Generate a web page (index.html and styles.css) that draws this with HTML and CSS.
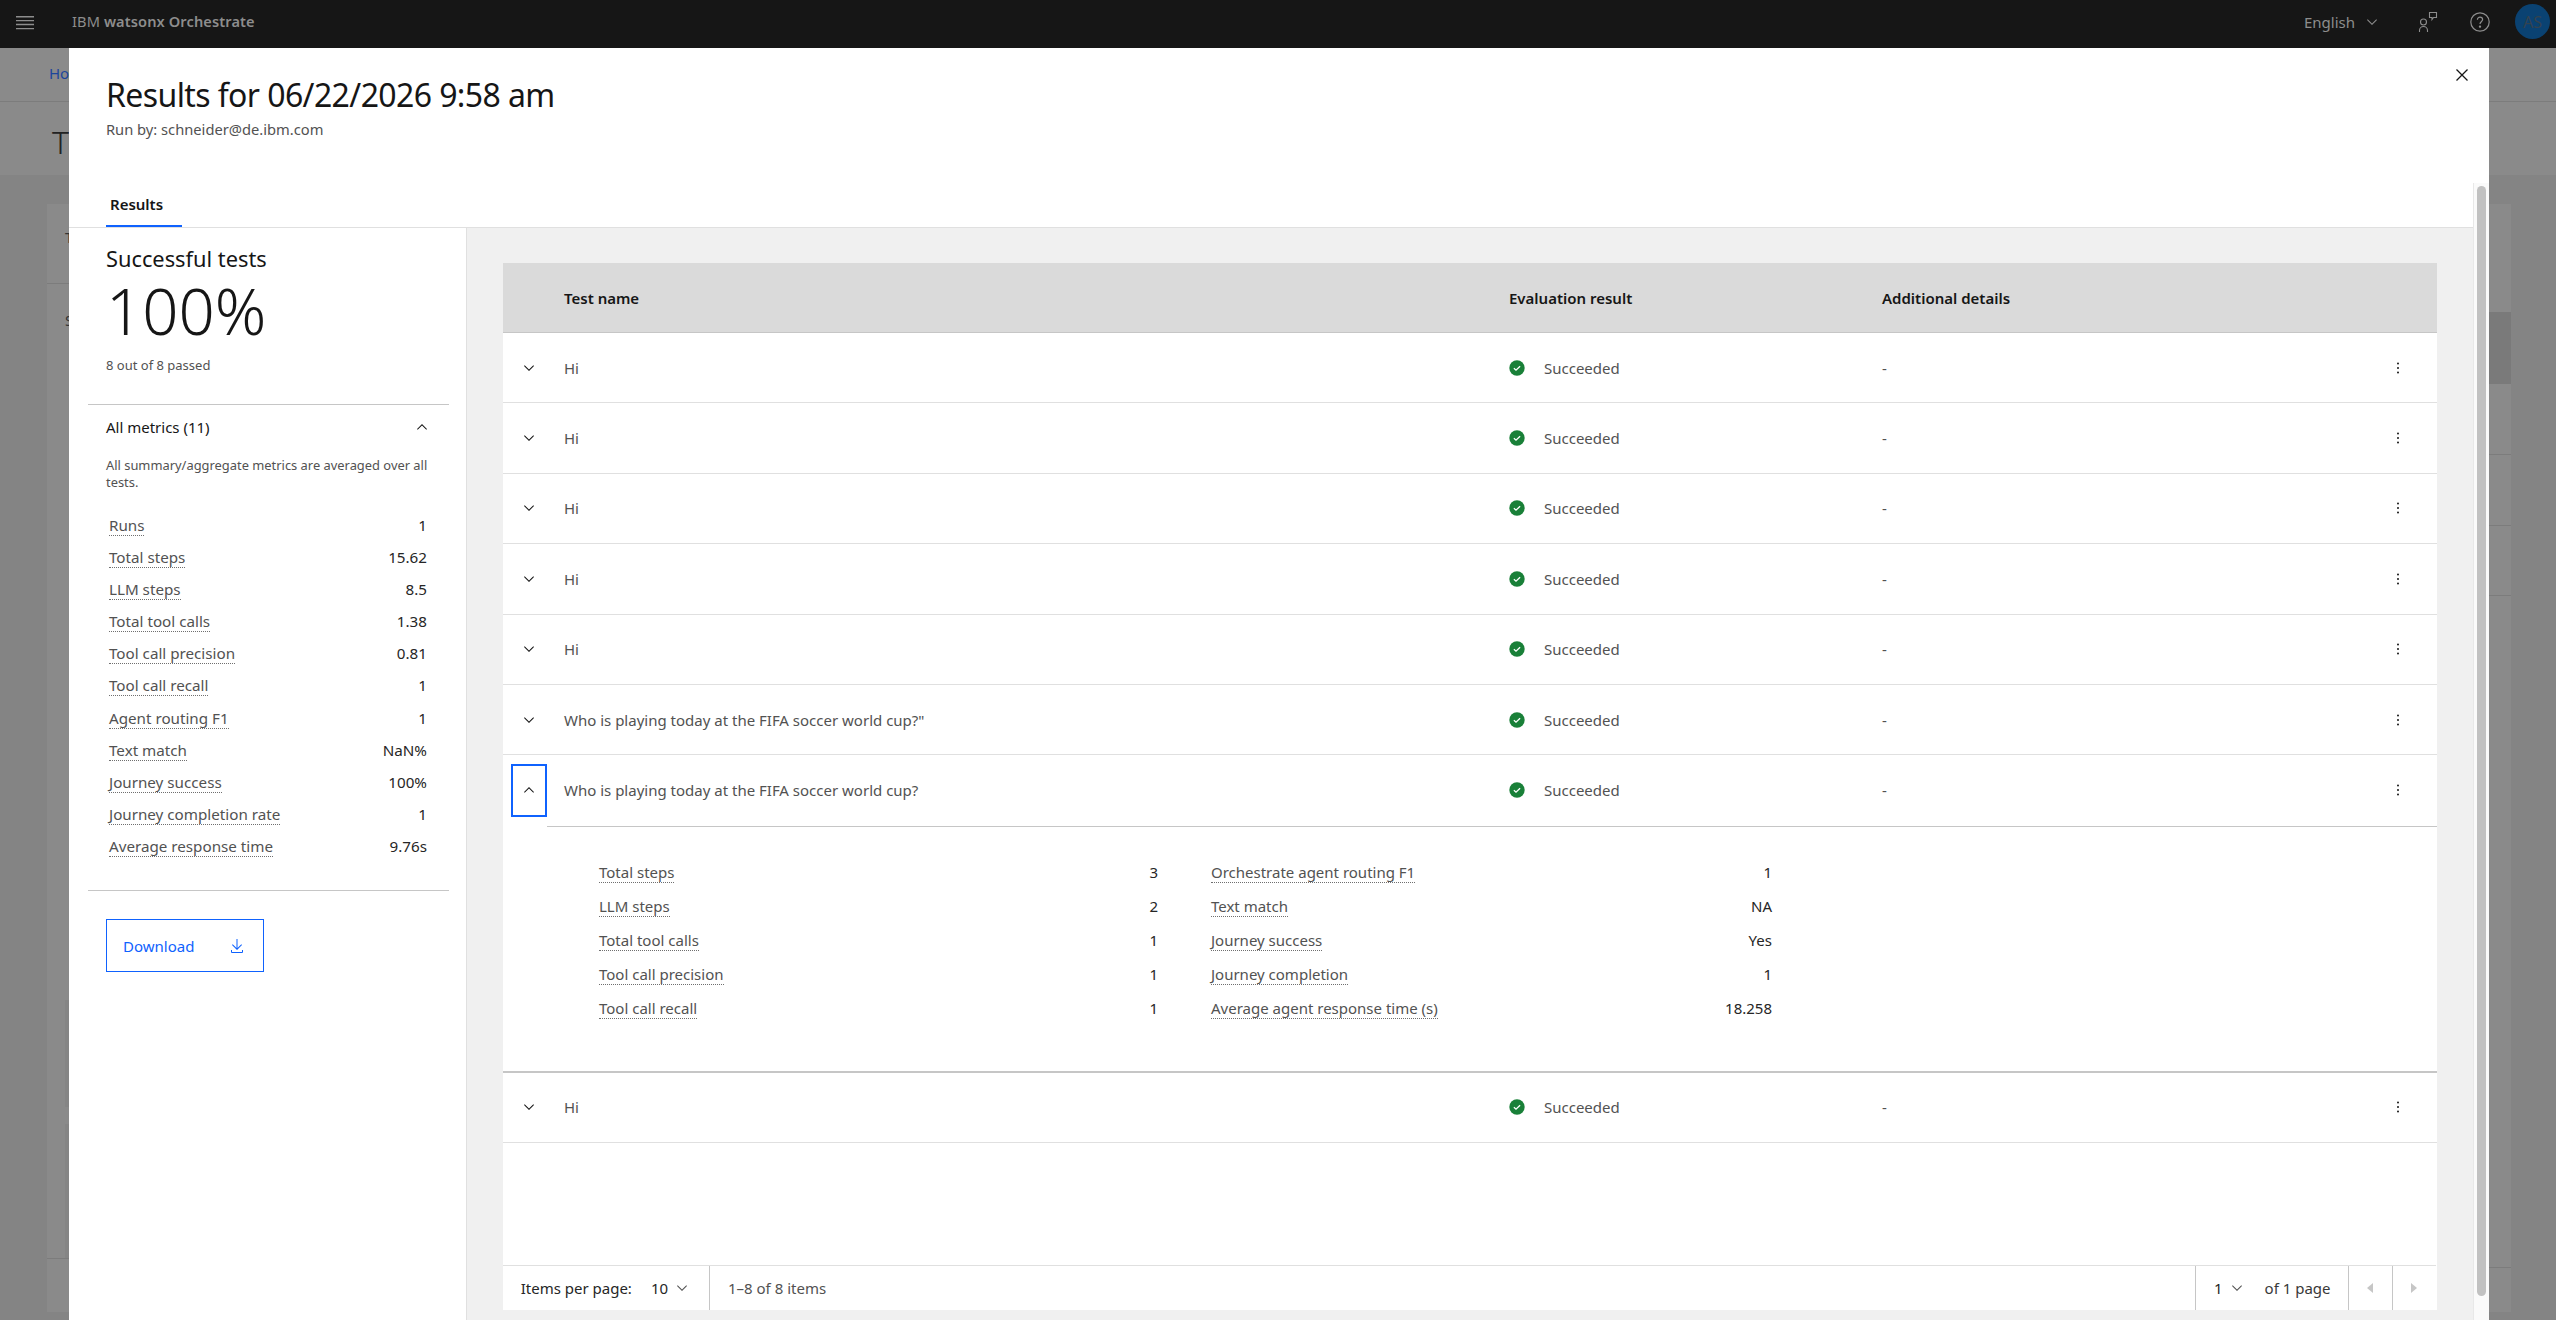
FILE: index.html
```html
<!DOCTYPE html>
<html lang="en">
<head>
<meta charset="utf-8">
<title>Results</title>
<link rel="stylesheet" href="styles.css">
</head>
<body>
<svg class="sprite" aria-hidden="true">
  <symbol id="down" viewBox="0 0 16 16"><path d="M8 11 3 6l.7-.7L8 9.6l4.3-4.3.7.7z"/></symbol>
  <symbol id="up" viewBox="0 0 16 16"><path d="m8 5 5 5-.7.7L8 6.4l-4.3 4.3L3 10z"/></symbol>
  <symbol id="more" viewBox="0 0 16 16"><circle cx="8" cy="3.5" r="1"/><circle cx="8" cy="8" r="1"/><circle cx="8" cy="12.5" r="1"/></symbol>
  <symbol id="ok" viewBox="0 0 16 16"><circle cx="8" cy="8" r="7.7" fill="#198038"/><path d="M4.9 8.2 7 10.2l4.1-4" fill="none" stroke="#fff" stroke-width="1.3"/></symbol>
</svg>

<header class="topbar">
  <svg class="burger" viewBox="0 0 18 14"><path d="M0 .7h18M0 4.6h18M0 8.5h18M0 12.6h18" stroke="#8d8d8d" stroke-width="1.4"/></svg>
  <div class="brand">IBM <b>watsonx Orchestrate</b></div>
  <div class="lang">English <svg class="ic16 dim"><use href="#down"/></svg></div>
  <svg class="chat" viewBox="0 0 24 24" fill="none" stroke="#8d8d8d" stroke-width="1.1">
    <circle cx="7.5" cy="13" r="3"/>
    <path d="M3.5 23v-1.500a4 4 0 0 1 8 0V23"/>
    <path d="M13.500 3.500h7v5h-3l-1.500 2v-2h-2.500z"/>
  </svg>
  <svg class="help" viewBox="0 0 20 20" fill="none" stroke="#8d8d8d" stroke-width="1.2">
    <circle cx="10" cy="10" r="9.2"/>
    <path d="M7.4 7.8c0-1.600 1.100-2.600 2.600-2.600s2.600 1 2.600 2.400c0 2.200-2.600 2.200-2.600 4.400"/>
    <circle cx="10" cy="14.600" r=".6" fill="#8d8d8d"/>
  </svg>
  <div class="avatar">AS</div>
</header>

<div class="page">
  <div class="page-head">
    <div class="crumbs"><a class="crumb">Home</a></div>
    <div class="page-title">T</div>
  </div>
  <div class="page-body">
    <div class="card">
      <div class="card-left">
        <div class="cl-head">T</div>
        <div class="cl-body">
          <div class="cl-s">S</div>
          <div class="cl-block"></div>
          <div class="cl-block second"></div>
        </div>
        <div class="cl-foot"></div>
      </div>
      <div class="card-right">
        <div class="cr-dark"></div>
        <div class="cr-row"></div>
        <div class="cr-row"></div>
        <div class="cr-row"></div>
        <div class="cr-fill"></div>
        <div class="cr-foot"></div>
      </div>
    </div>
  </div>
</div>

<section class="modal">
  <div class="modal-head">
    <div class="head-top">
      <div class="head-text">
        <h1 class="title">Results for 06/22/2026 9:58 am</h1>
        <div class="runby">Run by: schneider@de.ibm.com</div>
      </div>
      <svg class="close" viewBox="0 0 20 20" fill="none" stroke="#161616" stroke-width="1.3"><path d="M4.500 4.500l11 11M15.500 4.500l-11 11"/></svg>
    </div>
    <div class="tabs"><div class="tab">Results</div></div>
  </div>

  <div class="modal-body">
    <aside class="side">
      <div class="succ">Successful tests</div>
      <div class="pct">100%</div>
      <div class="passed">8 out of 8 passed</div>
      <div class="acc">
        <div class="acc-head"><span>All metrics (11)</span><svg class="ic16"><use href="#up"/></svg></div>
        <p class="acc-desc">All summary/aggregate metrics are averaged over all tests.</p>
        <div class="m"><span class="lb">Runs</span><span>1</span></div>
        <div class="m"><span class="lb">Total steps</span><span>15.62</span></div>
        <div class="m"><span class="lb">LLM steps</span><span>8.5</span></div>
        <div class="m"><span class="lb">Total tool calls</span><span>1.38</span></div>
        <div class="m"><span class="lb">Tool call precision</span><span>0.81</span></div>
        <div class="m"><span class="lb">Tool call recall</span><span>1</span></div>
        <div class="m"><span class="lb">Agent routing F1</span><span>1</span></div>
        <div class="m"><span class="lb">Text match</span><span>NaN%</span></div>
        <div class="m"><span class="lb">Journey success</span><span>100%</span></div>
        <div class="m"><span class="lb">Journey completion rate</span><span>1</span></div>
        <div class="m"><span class="lb">Average response time</span><span>9.76s</span></div>
      </div>
      <button class="dl">Download
        <svg class="ic16 blue" viewBox="0 0 16 16"><path d="M13 12v2H3v-2H2v2a1 1 0 0 0 1 1h10a1 1 0 0 0 1-1v-2zM13 7l-.7-.7-3.800 3.800V1h-1v9.100L3.700 6.300 3 7l5 5z"/></svg>
      </button>
    </aside>

    <main class="results">
      <div class="table">
        <div class="row thead"><span></span><span>Test name</span><span>Evaluation result</span><span>Additional details</span><span></span></div>

        <div class="row"><span class="exp"><svg class="ic16"><use href="#down"/></svg></span><span>Hi</span><span class="st"><svg class="ic16"><use href="#ok"/></svg>Succeeded</span><span>-</span><svg class="ic16 more"><use href="#more"/></svg></div>
        <div class="row"><span class="exp"><svg class="ic16"><use href="#down"/></svg></span><span>Hi</span><span class="st"><svg class="ic16"><use href="#ok"/></svg>Succeeded</span><span>-</span><svg class="ic16 more"><use href="#more"/></svg></div>
        <div class="row"><span class="exp"><svg class="ic16"><use href="#down"/></svg></span><span>Hi</span><span class="st"><svg class="ic16"><use href="#ok"/></svg>Succeeded</span><span>-</span><svg class="ic16 more"><use href="#more"/></svg></div>
        <div class="row"><span class="exp"><svg class="ic16"><use href="#down"/></svg></span><span>Hi</span><span class="st"><svg class="ic16"><use href="#ok"/></svg>Succeeded</span><span>-</span><svg class="ic16 more"><use href="#more"/></svg></div>
        <div class="row"><span class="exp"><svg class="ic16"><use href="#down"/></svg></span><span>Hi</span><span class="st"><svg class="ic16"><use href="#ok"/></svg>Succeeded</span><span>-</span><svg class="ic16 more"><use href="#more"/></svg></div>
        <div class="row"><span class="exp"><svg class="ic16"><use href="#down"/></svg></span><span>Who is playing today at the FIFA soccer world cup?"</span><span class="st"><svg class="ic16"><use href="#ok"/></svg>Succeeded</span><span>-</span><svg class="ic16 more"><use href="#more"/></svg></div>
        <div class="row open"><span class="exp focus"><svg class="ic16"><use href="#up"/></svg></span><span>Who is playing today at the FIFA soccer world cup?</span><span class="st"><svg class="ic16"><use href="#ok"/></svg>Succeeded</span><span>-</span><svg class="ic16 more"><use href="#more"/></svg></div>

        <div class="detail">
          <div class="d-grid">
            <div class="d"><span class="lb">Total steps</span><span>3</span></div>
            <div class="d"><span class="lb">Orchestrate agent routing F1</span><span>1</span></div>
            <div class="d"><span class="lb">LLM steps</span><span>2</span></div>
            <div class="d"><span class="lb">Text match</span><span>NA</span></div>
            <div class="d"><span class="lb">Total tool calls</span><span>1</span></div>
            <div class="d"><span class="lb">Journey success</span><span>Yes</span></div>
            <div class="d"><span class="lb">Tool call precision</span><span>1</span></div>
            <div class="d"><span class="lb">Journey completion</span><span>1</span></div>
            <div class="d"><span class="lb">Tool call recall</span><span>1</span></div>
            <div class="d"><span class="lb">Average agent response time (s)</span><span>18.258</span></div>
          </div>
        </div>

        <div class="row"><span class="exp"><svg class="ic16"><use href="#down"/></svg></span><span>Hi</span><span class="st"><svg class="ic16"><use href="#ok"/></svg>Succeeded</span><span>-</span><svg class="ic16 more"><use href="#more"/></svg></div>

        <div class="filler"></div>

        <div class="pager">
          <div class="pg-left">
            <span class="ipp">Items per page:</span>
            <span class="sel">10</span>
            <svg class="ic16 gray"><use href="#down"/></svg>
          </div>
          <div class="pg-count">1–8 of 8 items</div>
          <div class="pg-page">
            <span class="sel">1</span>
            <svg class="ic16 gray"><use href="#down"/></svg>
            <span class="of">of 1 page</span>
          </div>
          <div class="pg-btn"><svg class="caret" viewBox="0 0 8 10"><path d="M7 0v10L1 5z"/></svg></div>
          <div class="pg-btn"><svg class="caret" viewBox="0 0 8 10"><path d="M1 0v10l6-5z"/></svg></div>
        </div>
      </div>
    </main>
  </div>

  <div class="scroll"><div class="thumb"></div></div>
</section>
</body>
</html>
```

FILE: styles.css
```css
* { box-sizing: border-box; }
html, body { margin: 0; height: 1320px; overflow: hidden; }
body {
  position: relative;
  background: #848484;
  font-family: "Noto Sans", "Liberation Sans", sans-serif;
  font-size: 15px;
  color: #161616;
}
.sprite { display: none; }
.ic16 { width: 16px; height: 16px; flex: none; display: block; fill: #161616; }
.ic16.dim { fill: #8d8d8d; }
.ic16.gray { fill: #525252; }
.ic16.blue { fill: #0f62fe; }

/* top bar */
.topbar { height: 48px; background: #161616; display: flex; align-items: center; color: #8d8d8d; }
.burger { width: 18px; height: 14px; margin-left: 16px; margin-top: -2px; }
.brand { margin-left: 38px; margin-top: -6px; font-size: 14.6px; flex: 1; letter-spacing: .1px; }
.brand b { font-weight: 600; }
.lang { display: flex; align-items: center; gap: 9px; margin-top: -5px; font-size: 15px; }
.chat { width: 24px; height: 24px; margin-left: 36px; margin-top: -7px; }
.help { width: 20px; height: 20px; margin-left: 30px; margin-top: -5px; }
.avatar {
  width: 35px; height: 35px; border-radius: 50%; margin: -5px 6px 0 25px;
  background: #0a4272; color: #34424f; display: flex; align-items: center; justify-content: center; font-size: 16px;
}

/* dimmed page behind the modal */
.page-head { height: 127px; background: #8a8a8a; }
.crumbs { height: 54px; border-bottom: 1px solid #7c7c7c; padding: 15px 0 0 49px; line-height: 20px; }
.crumb { color: #1c459c; }
.page-title { padding: 20px 0 0 52px; font-size: 32px; line-height: 40px; color: #222; font-weight: 300; }
.page-body { padding: 29px 45px 0 47px; }
.card { height: 1108px; background: #8a8a8a; display: flex; justify-content: space-between; }
.card-left { width: 30px; display: flex; flex-direction: column; padding-left: 0; }
.cl-head { height: 80px; border-bottom: 1px solid #7c7c7c; padding: 24px 0 0 18px; line-height: 18px; color: #333; }
.cl-body { flex: 1; padding: 0 0 0 18px; position: relative; }
.cl-s { padding-top: 26px; line-height: 20px; color: #333; }
.cl-block { height: 107px; background: #858585; margin-top: 670px; }
.cl-block.second { height: 134px; margin-top: 17px; }
.cl-foot { height: 54px; border-top: 1px solid #7c7c7c; }
.card-right { width: 22px; display: flex; flex-direction: column; padding-top: 108px; }
.cr-dark { height: 72px; background: #7a7a7a; }
.cr-row { height: 71px; border-bottom: 1px solid #7c7c7c; }
.cr-row:nth-child(4) { height: 70px; }
.cr-fill { flex: 1; }
.cr-foot { height: 45px; border-top: 1px solid #7c7c7c; }

/* modal */
.modal {
  position: absolute; left: 69.4px; top: 48px; bottom: 0; width: 2419.2px;
  background: #fff; display: flex; flex-direction: column;
}
.modal-head { height: 180px; margin-right: 15.6px; border-bottom: 1px solid #e0e0e0; padding: 17px 0 0 36.6px; display: flex; flex-direction: column; }
.head-top { display: flex; justify-content: space-between; flex: 1; }
.head-text { padding-top: 10px; }
.title { margin: 0; font-size: 32px; line-height: 40px; font-weight: 400; color: #161616; letter-spacing: -.6px; }
.runby { margin-top: 4px; line-height: 20px; color: #525252; font-size: 14.7px; }
.close { width: 20px; height: 20px; flex: none; margin-right: 1px; }
.tabs { display: flex; }
.tab { width: 76px; height: 37px; padding: 4px 0 0 4px; line-height: 20px; font-weight: 600; border-bottom: 2px solid #0f62fe; color: #161616; }

.modal-body { flex: 1; display: flex; padding-right: 15.6px; min-height: 0; }
.side { flex: 0 0 397.600px; border-right: 1px solid #e0e0e0; padding: 17px 0 0 36.6px; }
.succ { font-size: 21.800px; line-height: 28px; }
.pct { font-size: 63.500px; line-height: 70px; margin-top: 3px; font-weight: 300; }
.passed { margin-top: 11px; font-size: 13px; line-height: 16px; color: #525252; }
.acc { margin: 31px 0 0 -18px; width: 361px; border-top: 1px solid #c6c6c6; border-bottom: 1px solid #c6c6c6; padding: 12px 18px 28px; }
.acc-head { display: flex; justify-content: space-between; align-items: center; line-height: 20px; padding-right: 1px; }
.acc-desc { margin: 20px 0 18px; font-size: 12.9px; line-height: 17px; color: #525252; width: 325px; }
.m { display: flex; justify-content: space-between; align-items: flex-start; height: 32.1px; padding: 7px 4px 0 3px; line-height: 18px; font-size: 15.2px; color: #262626; }
.lb { color: #525252; border-bottom: 1px dotted #6f6f6f; height: 20px; }
.dl {
  margin-top: 28px; width: 158px; height: 53px; background: #fff; border: 1px solid #0f62fe;
  color: #0f62fe; font: inherit; display: flex; justify-content: space-between; align-items: center; padding: 0 18px 0 16px;
}

.results { flex: 1; background: #f0f0f0; padding: 35px 36px 10px; min-width: 0; }
.table { height: 100%; background: #fff; display: flex; flex-direction: column; }
.row {
  display: grid; grid-template-columns: 61px 945px 373px 1fr 16px; align-items: center;
  height: 70.4px; flex: none; border-bottom: 1px solid #e0e0e0; color: #525252; padding-right: 31px;
}
.thead { height: 70px; background: #dadada; border-bottom-color: #c6c6c6; font-weight: 600; color: #161616; }
.row.open { border-bottom-color: transparent; }
.exp { margin-left: 8px; width: 36px; height: 53px; display: flex; align-items: center; justify-content: center; }
.exp.focus { border: 2px solid #0f62fe; }
.st { display: flex; align-items: center; gap: 19px; }
.detail { height: 247px; flex: none; border-bottom: 2px solid #c6c6c6; position: relative; padding: 30px 0 0 96px; }
.detail::before { content: ""; position: absolute; left: 44px; right: 0; top: 0; border-top: 1px solid #c6c6c6; }
.d-grid { display: grid; grid-template-columns: 559px 561px; column-gap: 53px; grid-auto-rows: 34px; }
.d { display: flex; justify-content: space-between; padding-top: 7px; line-height: 18px; color: #262626; }
.filler { flex: 1; }
.pager { height: 45px; flex: none; border-top: 1px solid #e0e0e0; display: flex; margin-right: 1px; }
.pager > div { display: flex; align-items: center; }
.pg-left { width: 207px; padding-left: 17.7px; border-right: 1px solid #c6c6c6; color: #262626; }
.ipp { margin-right: 19px; }
.sel { margin-right: 6px; color: #262626; }
.pg-count { flex: 1; padding-left: 18px; color: #525252; }
.pg-page { width: 153px; border-left: 1px solid #c6c6c6; padding-left: 18px; }
.of { margin-left: 20px; color: #393939; }
.pg-btn { width: 44px; border-left: 1px solid #c6c6c6; justify-content: center; }
.caret { width: 8px; height: 10px; fill: #c6c6c6; }

.scroll { position: absolute; right: 0; top: 135px; bottom: 0; width: 16px; background: #fafafa; border-left: 1px solid #e8e8e8; padding: 3px 3px 0 3px; }
.thumb { height: 1110px; background: #c1c1c1; border-radius: 6px; }
```
